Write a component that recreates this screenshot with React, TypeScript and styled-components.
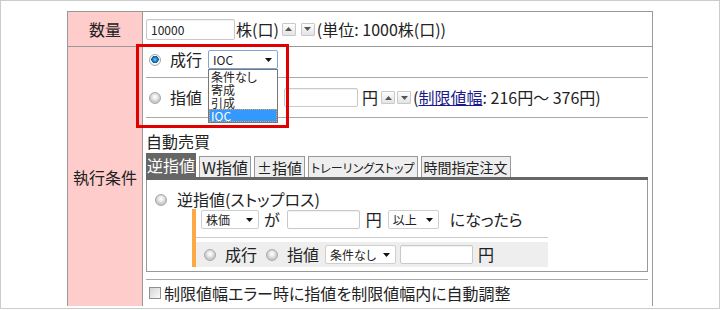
import React from 'react';
import styled, { createGlobalStyle } from 'styled-components';

// === Global ===
const GlobalStyle = createGlobalStyle`
  html, body { margin: 0; padding: 0; background: #fff; }
  body {
    font-family: "Noto Sans CJK JP", "Noto Sans", sans-serif;
    font-feature-settings: "palt";
    color: #222;
  }
`;

// === Layout ===
const Frame = styled.div`
  position: relative;
  width: 720px;
  height: 309px;
  box-sizing: border-box;
  border: 1px solid #ccc;
  padding: 10px 0 0 66px;
  overflow: hidden;
`;

const Table = styled.div`
  width: 586px;
  box-sizing: border-box;
  border: 1px solid #999;
  border-bottom: none;
  display: grid;
  grid-template-columns: 75px 1fr;
`;

const Label = styled.div<{ $last?: boolean }>`
  box-sizing: border-box;
  background: #ffcccc;
  border-right: 1px solid #999;
  border-bottom: ${p => (p.$last ? 'none' : '1px solid #999')};
  display: flex;
  align-items: center;
  justify-content: center;
  font-size: 16px;
  line-height: 20px;
`;

const Cell = styled.div<{ $last?: boolean }>`
  box-sizing: border-box;
  border-bottom: ${p => (p.$last ? 'none' : '1px solid #999')};
  padding: 0 4px 0 3px;
`;

const QtyRow = styled.div`
  height: 34px;
  display: flex;
  align-items: center;
  font-size: 16px;
`;

const SubRow = styled.div<{ $h: number; $top?: number; $last?: boolean }>`
  box-sizing: content-box;
  height: ${p => p.$h}px;
  padding-top: ${p => p.$top ?? 0}px;
  border-bottom: ${p => (p.$last ? 'none' : '1px solid #aaa')};
  display: flex;
  align-items: ${p => (p.$top ? 'flex-start' : 'center')};
  font-size: 16px;
`;

const AutoBlock = styled.div`
  padding: 12px 0 7px;
  border-bottom: 1px solid #aaa;
`;

const AutoTitle = styled.div`
  font-size: 16px;
  line-height: 22px;
  margin-bottom: 1px;
`;

const Text = styled.span<{ $ml?: number; $size?: number }>`
  margin-left: ${p => p.$ml ?? 0}px;
  font-size: ${p => p.$size ?? 16}px;
  line-height: 19px;
  white-space: nowrap;
`;

const Link = styled.a`
  color: #1a1a8c;
  text-decoration: underline;
`;

// === Tabs ===
const TabBar = styled.div`
  height: 24px;
  display: flex;
  align-items: flex-end;
  gap: 3px;
  border-bottom: 3px solid #666;
`;

const Tab = styled.div<{ $active?: boolean; $size: number }>`
  box-sizing: border-box;
  height: ${p => (p.$active ? 24 : 21)}px;
  padding: 0 ${p => (p.$active ? 1 : 2)}px;
  display: flex;
  align-items: center;
  font-size: ${p => p.$size}px;
  white-space: nowrap;
  background: ${p => (p.$active ? '#666' : '#eee')};
  color: ${p => (p.$active ? '#fff' : '#222')};
  border: ${p => (p.$active ? 'none' : '1px solid #999')};
  border-bottom: none;
`;

const Panel = styled.div`
  border: 1px solid #999;
  border-top: none;
  padding: 10px 0 4px;
`;

const PanelHead = styled.div`
  height: 19px;
  display: flex;
  align-items: center;
  padding-left: 8px;
  font-size: 16px;
`;

const Cond = styled.div`
  margin-left: 45px;
  width: 352px;
  border-left: 4px solid #ffa846;
`;

const CondRow = styled.div`
  height: 27px;
  padding: 1px 0 0 5px;
  display: flex;
  align-items: flex-start;
  border-bottom: 1px solid #ccc;
  margin-bottom: 4px;
  font-size: 16px;
`;

const ExecRow = styled.div`
  height: 25px;
  padding-left: 8px;
  display: flex;
  align-items: center;
  background: #eee;
  font-size: 16px;
`;

const CheckRow = styled.div`
  height: 26px;
  display: flex;
  align-items: center;
  padding-left: 3px;
  font-size: 16px;
`;

// === Controls ===
const Input = styled.div<{ $w: number; $h?: number; $ml?: number }>`
  box-sizing: border-box;
  width: ${p => p.$w}px;
  height: ${p => p.$h ?? 19}px;
  margin-left: ${p => p.$ml ?? 0}px;
  border: 1px solid #c9c9c9;
  border-radius: 2px;
  box-shadow: inset 0 1px 1px rgba(0, 0, 0, 0.06);
  background: #fff;
  font-size: 12px;
  line-height: ${p => (p.$h ?? 19) - 2}px;
  padding-left: 4px;
  flex-shrink: 0;
`;

const SelectBox = styled.div<{ $w: number; $ml?: number; $focus?: boolean }>`
  position: relative;
  box-sizing: border-box;
  width: ${p => p.$w}px;
  height: 19px;
  margin-left: ${p => p.$ml ?? 0}px;
  border: 1px solid ${p => (p.$focus ? '#7ea6d8' : '#cfcfcf')};
  border-radius: 2px;
  background: #fff;
  display: flex;
  align-items: center;
  justify-content: space-between;
  padding: 0 5px 0 4px;
  font-size: 12px;
  flex-shrink: 0;
`;

const DropList = styled.ul`
  position: absolute;
  left: -1px;
  top: 18px;
  width: 70px;
  box-sizing: border-box;
  margin: 0;
  padding: 0;
  list-style: none;
  border: 1px solid #777;
  background: #fff;
  z-index: 2;
`;

const DropItem = styled.li<{ $sel?: boolean }>`
  height: 13px;
  font-size: 12px;
  line-height: 13px;
  padding-left: 2px;
  white-space: nowrap;
  background: ${p => (p.$sel ? '#3399ff' : '#fff')};
  color: ${p => (p.$sel ? '#fff' : '#222')};
  outline: ${p => (p.$sel ? '1px dotted #e8a050' : 'none')};
  outline-offset: -1px;
`;

const SpinBtn = styled.span<{ $ml?: number }>`
  box-sizing: border-box;
  width: 14px;
  height: 13px;
  margin-left: ${p => p.$ml ?? 0}px;
  border: 1px solid #c8c8c8;
  border-radius: 1px;
  background: linear-gradient(#fdfdfd, #e4e4e4);
  display: inline-flex;
  align-items: center;
  justify-content: center;
  flex-shrink: 0;
`;

const RadioDot = styled.span<{ $on?: boolean; $ml?: number }>`
  box-sizing: border-box;
  width: 12px;
  height: 12px;
  margin-left: ${p => p.$ml ?? 0}px;
  border-radius: 50%;
  border: 1px solid #a8a8a8;
  background: ${p =>
    p.$on
      ? 'radial-gradient(circle at 50% 45%, #7fd0ff 0, #1b86cc 2px, #0a5a96 3.5px, #fff 4px, #f2f2f2 5px)'
      : 'radial-gradient(circle at 50% 40%, #fff 0, #f0f0f0 2px, #c8c8c8 5px)'};
  flex-shrink: 0;
`;

const CheckBox = styled.span`
  box-sizing: border-box;
  width: 12px;
  height: 12px;
  border: 1px solid #8f8f8f;
  background: linear-gradient(135deg, #d4d4d4, #fafafa);
  flex-shrink: 0;
`;

const Callout = styled.div`
  position: absolute;
  left: 135px;
  top: 43px;
  width: 153px;
  height: 84px;
  box-sizing: border-box;
  border: 3px solid #e00000;
  pointer-events: none;
  z-index: 3;
`;

// === Small parts ===
const Arrow = () => (
  <svg width="7" height="4" viewBox="0 0 7 4">
    <path d="M0 0h7L3.5 4z" fill="#111" />
  </svg>
);

const Spin = ({ up, ml }: { up?: boolean; ml?: number }) => (
  <SpinBtn $ml={ml}>
    <svg width="7" height="4" viewBox="0 0 7 4">
      <path d={up ? 'M0 4h7L3.5 0z' : 'M0 0h7L3.5 4z'} fill="#555" />
    </svg>
  </SpinBtn>
);

const Select: React.FC<{ w: number; ml?: number; value: string; focus?: boolean; children?: React.ReactNode }> = ({
  w,
  ml,
  value,
  focus,
  children,
}) => (
  <SelectBox $w={w} $ml={ml} $focus={focus}>
    <span>{value}</span>
    <Arrow />
    {children}
  </SelectBox>
);

// tab label + font size (the long ones are set smaller to fit like the original)
const tabs: [string, number][] = [
  ['逆指値', 16],
  ['W指値', 16],
  ['±指値', 15],
  ['トレーリングストップ', 12],
  ['時間指定注文', 14],
];

export default function App() {
  return (
    <>
      <GlobalStyle />
      <Frame>
        <Table>
          <Label>数量</Label>
          <Cell>
            <QtyRow>
              <Input $w={89} $h={21}>10000</Input>
              <Text $ml={1}>株(口)</Text>
              <Spin up ml={3} />
              <Spin ml={5} />
              <Text $ml={2}>(単位: 1000株(口))</Text>
            </QtyRow>
          </Cell>

          <Label $last>執行条件</Label>
          <Cell $last>
            <SubRow $h={27} $top={3}>
              <RadioDot $on $ml={3} style={{ marginTop: 4 }} />
              <Text $ml={9}>成行</Text>
              <Select w={70} ml={6} value="IOC" focus>
                <DropList>
                  <DropItem>条件なし</DropItem>
                  <DropItem>寄成</DropItem>
                  <DropItem>引成</DropItem>
                  <DropItem $sel>IOC</DropItem>
                </DropList>
              </Select>
            </SubRow>
            <SubRow $h={39}>
              <RadioDot $ml={3} />
              <Text $ml={9}>指値</Text>
              <Select w={70} ml={6} value="" />
              <Input $w={74} $ml={6} />
              <Text $ml={4}>円</Text>
              <Spin up ml={3} />
              <Spin ml={2} />
              <Text $ml={2}>
                (<Link>制限値幅</Link>: 216円〜 376円)
              </Text>
            </SubRow>

            <AutoBlock>
              <AutoTitle>自動売買</AutoTitle>
              <TabBar>
                {tabs.map(([t, size], i) => (
                  <Tab key={t} $active={i === 0} $size={size}>
                    {t}
                  </Tab>
                ))}
              </TabBar>
              <Panel>
                <PanelHead>
                  <RadioDot />
                  <Text $ml={10}>逆指値(ストップロス)</Text>
                </PanelHead>
                <Cond>
                  <CondRow>
                    <Select w={58} value="株価" />
                    <Text $ml={5} style={{ lineHeight: '18px' }}>が</Text>
                    <Input $w={73} $ml={7} />
                    <Text $ml={6} style={{ lineHeight: '18px' }}>円</Text>
                    <Select w={51} ml={6} value="以上" />
                    <Text $ml={11} style={{ lineHeight: '18px' }}>になったら</Text>
                  </CondRow>
                  <ExecRow>
                    <RadioDot />
                    <Text $ml={9}>成行</Text>
                    <RadioDot $ml={9} />
                    <Text $ml={9}>指値</Text>
                    <Select w={71} ml={6} value="条件なし" />
                    <Input $w={73} $ml={4} />
                    <Text $ml={5}>円</Text>
                  </ExecRow>
                </Cond>
              </Panel>
            </AutoBlock>

            <CheckRow>
              <CheckBox />
              <Text $ml={3}>制限値幅エラー時に指値を制限値幅内に自動調整</Text>
            </CheckRow>
          </Cell>
        </Table>
        <Callout />
      </Frame>
    </>
  );
}
